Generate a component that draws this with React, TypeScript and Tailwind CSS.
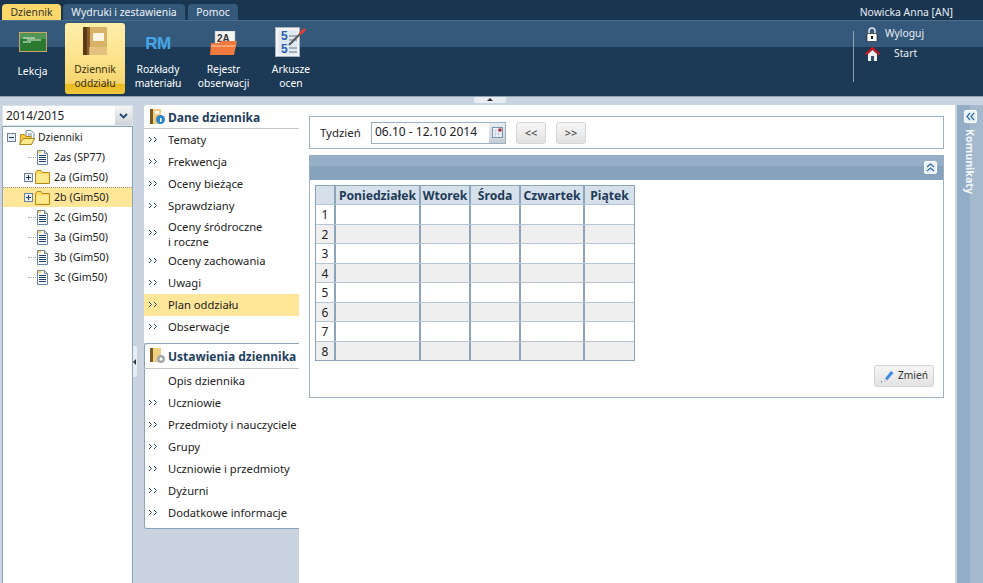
import type { ReactNode } from "react";

const Chevrons = () => (
  <svg width="10" height="7" viewBox="0 0 10 7" className="shrink-0">
    <path d="M1 1l2.500 2.500L1 6M6 1l2.500 2.500L6 6" fill="none" stroke="#1d4a78" strokeWidth="1" />
  </svg>
);

const DocIcon = () => (
  <svg width="11" height="15" viewBox="0 0 11 15" className="shrink-0">
    <path d="M.5.500h7l3 3v11H.5z" fill="#f7f9fc" stroke="#6d86a0" />
    <path d="M7.500.500v3h3" fill="#ffe69a" stroke="#6d86a0" />
    <rect x="1" y="1" width="3" height="2" fill="#ffd75a" />
    <path d="M2 5.500h7M2 7.500h7M2 9.500h7M2 11.500h7" stroke="#1f4468" />
  </svg>
);

const FolderIcon = ({ open }: { open?: boolean }) =>
  open ? (
    <svg width="16" height="15" viewBox="0 0 16 15" className="shrink-0">
      <path d="M7 .5h5l3 3v6H7z" fill="#fff" stroke="#6f88a0" />
      <path d="M9 4h4M9 6h4" stroke="#6f88a0" />
      <path d="M1.500 4.500h4l1.500 2h5v8h-11z" fill="#ffcb3d" stroke="#b08a1e" />
      <path d="M4 8.500h11.500l-3 6H.5z" fill="#ffe98f" stroke="#b08a1e" />
    </svg>
  ) : (
    <svg width="15" height="14" viewBox="0 0 15 14" className="shrink-0">
      <path d="M.5 2.500L2 .5h4l1.500 2h7v11H.5z" fill="#ffd75a" stroke="#b08a1e" />
      <path d="M1.500 4h12v8.500h-12z" fill="#ffe98f" />
    </svg>
  );

const Expander = ({ minus }: { minus?: boolean }) => (
  <svg width="9" height="9" viewBox="0 0 9 9" className="shrink-0">
    <rect x=".5" y=".5" width="8" height="8" fill="#e8eef4" stroke="#6d8299" />
    <path d={minus ? "M2 4.500h5" : "M2 4.500h5M4.500 2v5"} stroke="#1d3c5c" />
  </svg>
);

const TreeRow = ({ label, folder, active }: { label: string; folder?: boolean; active?: boolean }) => (
  <div className={`h-5 flex items-center text-[10.7px] text-[#222] ${active ? "bg-[#ffe699] border-t border-dotted border-[#999]" : ""}`}>
    {folder ? (
      <>
        <div className="ml-[21px]"><Expander /></div>
        <div className="ml-[2px]"><FolderIcon /></div>
        <span className="ml-[4px] whitespace-nowrap">{label}</span>
      </>
    ) : (
      <>
        <div className="ml-[25px] w-[8px] border-t border-dotted border-[#aaa]" />
        <div className="ml-[1px]"><DocIcon /></div>
        <span className="ml-[6px] whitespace-nowrap">{label}</span>
      </>
    )}
  </div>
);

const MenuRow = ({ label, active, noMark, tall }: { label: string; active?: boolean; noMark?: boolean; tall?: boolean }) => (
  <div className={`flex items-center pl-[4px] text-[11.2px] leading-[15px] text-[#222] ${tall ? "h-[33px]" : "h-[22px]"} ${active ? "bg-[#ffe699]" : ""}`}>
    <div className="w-[20px] shrink-0 -mt-[2px]">{!noMark && <Chevrons />}</div>
    <span className={`whitespace-pre ${tall ? "" : "-mt-[2px]"}`}>{label}</span>
  </div>
);

const RibbonBtn = ({ label, icon, active, w, single }: { label: string; icon: ReactNode; active?: boolean; w: string; single?: boolean }) => (
  <div className={`${w} h-[71px] shrink-0 rounded-[3px] flex flex-col items-center ${active ? "bg-[linear-gradient(#ffeeaa_0%,#fde48f_45%,#f6d56f_85%,#eab91c_86%,#f0c83f_100%)] text-[#3b3010]" : "text-white"}`}>
    <div className="h-[32px] flex items-end justify-center">{icon}</div>
    <div className={`text-[10.3px] leading-[14px] text-center whitespace-pre ${single ? "mt-[9px]" : "mt-[7px]"}`}>{label}</div>
  </div>
);

const Board = () => (
  <svg width="28" height="20" viewBox="0 0 28 20" className="mb-[3px]">
    <rect x=".5" y=".5" width="27" height="19" fill="#2c7a32" stroke="#c9a66a" />
    <rect x="1" y="1" width="26" height="6" fill="#8db98c" opacity=".4" />
    <path d="M4 6h12M8 8h14M4 10h8" stroke="#e8f2e6" />
  </svg>
);

const Book = () => (
  <svg width="24" height="28" viewBox="0 0 24 28" className="shrink-0">
    <rect x="0" y="0" width="6" height="28" fill="#5b3a18" />
    <rect x="6" y="0" width="18" height="28" fill="#d9b167" />
    <rect x="4" y="0" width="3" height="28" fill="#8a5f2a" />
    <rect x="10" y="6" width="11" height="8" rx="1" fill="#fdf5e3" />
    <rect x="6" y="20" width="18" height="8" fill="#e9c88b" opacity=".7" />
  </svg>
);

const Rm = () => (
  <div className="mb-[1px] text-[#45a5e6] font-bold text-[17px] leading-[20px] tracking-tight font-['Liberation_Sans',sans-serif]">RM</div>
);

const Folder2a = () => (
  <svg width="28" height="24" viewBox="0 0 28 24" className="shrink-0">
    <rect x="5" y="0" width="20" height="16" fill="#f4f4f2" stroke="#aaa" strokeWidth=".5" />
    <text x="7" y="11" fontSize="10" fontWeight="700" fill="#333" fontFamily="'Liberation Sans',sans-serif">2A</text>
    <path d="M1 12h8l2-2h16l-3 14H0z" fill="#f07a3d" />
    <path d="M1.500 14h24l-.5 2H1z" fill="#f9a473" />
  </svg>
);

const Sheet = () => (
  <svg width="32" height="30" viewBox="0 0 32 30" className="shrink-0 -mb-[2px]">
    <rect x=".5" y=".5" width="24" height="29" fill="#f1f3f5" stroke="#a9b2ba" />
    <rect x="3.500" y="3.500" width="19" height="24" fill="#dfe9f3" />
    <text x="6" y="13" fontSize="12" fontWeight="700" fill="#2c5ea8" fontFamily="'Liberation Sans',sans-serif">5</text>
    <text x="6" y="26" fontSize="12" fontWeight="700" fill="#2c5ea8" fontFamily="'Liberation Sans',sans-serif">5</text>
    <path d="M14 9h8M14 13h8M14 21h8M14 25h8" stroke="#777" />
    <path d="M14 18L28 4" stroke="#555" strokeWidth="2" />
    <path d="M25 7l5-5" stroke="#e0402f" strokeWidth="3" />
  </svg>
);

const Lock = () => (
  <svg width="12" height="15" viewBox="0 0 12 15" className="shrink-0">
    <path d="M3 7V4a3 3 0 016 0v3" fill="none" stroke="#dfe6ee" strokeWidth="1.500" />
    <rect x="1" y="6.500" width="10" height="8" rx="1" fill="#fff" stroke="#111" strokeWidth=".6" />
    <rect x="5" y="9" width="2" height="3" fill="#222" />
  </svg>
);

const Home = () => (
  <svg width="15" height="14" viewBox="0 0 15 14" className="shrink-0">
    <path d="M3 7v7h9V7L7.500 3z" fill="#eef0f2" />
    <rect x="6" y="9" width="3" height="5" fill="#36506b" />
    <path d="M.5 7.500L7.500 1l7 6.500" fill="none" stroke="#e3101a" strokeWidth="1.800" />
  </svg>
);

const Pencil = () => (
  <svg width="14" height="14" viewBox="0 0 14 14" className="shrink-0">
    <path d="M5 9.500L11 2l2.500 2L7 11.500z" fill="#3c8ae0" />
    <path d="M5 9.500l2 2-3 1.500z" fill="#f5f5f5" stroke="#bbb" strokeWidth=".5" />
    <path d="M1 13l1-.5" stroke="#446" />
  </svg>
);

const CollapseBtn = ({ up }: { up?: boolean }) => (
  <div className="w-[13px] h-[13px] rounded-[2px] bg-[#eaf1f9] border border-[#fff] flex items-center justify-center">
    <svg width="9" height="9" viewBox="0 0 9 9">
      {up ? (
        <path d="M1 4l3.500-3L8 4M1 8l3.500-3L8 8" fill="none" stroke="#2d6aa5" strokeWidth="1.200" />
      ) : (
        <path d="M4 1L1 4.500 4 8M8 1L5 4.500 8 8" fill="none" stroke="#2d6aa5" strokeWidth="1.200" />
      )}
    </svg>
  </div>
);

const days = [
  { name: "Poniedziałek", w: "w-[85px]" },
  { name: "Wtorek", w: "w-[50px]" },
  { name: "Środa", w: "w-[50px]" },
  { name: "Czwartek", w: "w-[64px]" },
  { name: "Piątek", w: "w-[49px]" },
];

const ScheduleGrid = () => (
  <div className="w-[320px] border-l border-r border-b border-[#8ba4bc]">
    <div className="flex h-[19px] bg-[#d5e0ea] border-t border-[#8ba4bc]">
      <div className="w-[20px] shrink-0 border-r-2 border-[#8ba4bc]" />
      {days.map((d) => (
        <div key={d.name} className={`${d.w} shrink-0 border-r-2 last:border-r-0 border-[#8ba4bc] text-center font-bold text-[12.2px] leading-[19px] text-[#1f3b58] whitespace-nowrap`}>
          {d.name}
        </div>
      ))}
    </div>
    {[1, 2, 3, 4, 5, 6, 7, 8].map((n) => (
      <div key={n} className={`flex h-[19.5px] border-t border-[#b5c5d4] ${n % 2 === 0 ? "bg-[#efefef]" : "bg-white"}`}>
        <div className="w-[20px] shrink-0 border-r-2 border-[#8ba4bc] text-center text-[12px] leading-[20px] text-[#222]">{n}</div>
        {days.map((d) => (
          <div key={d.name} className={`${d.w} shrink-0 border-r-2 last:border-r-0 border-[#8ba4bc]`} />
        ))}
      </div>
    ))}
  </div>
);

export default function App() {
  return (
    <div className="w-[983px] h-[583px] overflow-hidden flex flex-col bg-[#c9d4e0] font-['Noto_Sans',sans-serif]">
      {/* tabs */}
      <div className="h-[21px] shrink-0 bg-[#1a3550] flex items-end justify-between pl-[2px] pr-[30px] border-b border-[#4a6f90]">
        <div className="flex gap-[2px] text-[10.4px] leading-[16px]">
          <div className="w-[59px] h-[16px] rounded-t-[4px] bg-[#fdd76a] text-[#333] text-center">Dziennik</div>
          <div className="w-[122px] h-[16px] rounded-t-[4px] bg-[#34597a] text-[#eef3f8] text-center">Wydruki i zestawienia</div>
          <div className="w-[50px] h-[16px] ml-[1px] rounded-t-[4px] bg-[#34597a] text-[#eef3f8] text-center">Pomoc</div>
        </div>
        <div className="text-[10.4px] leading-[16px] text-[#e8eef4]">Nowicka Anna [AN]</div>
      </div>

      {/* ribbon */}
      <div className="h-[76px] shrink-0 flex justify-between bg-[linear-gradient(#35597b_0%,#35597b_35%,#1c3a56_35%,#1c3a56_100%)] border-b border-[#8fa2b4]">
        <div className="flex items-start pt-[2px] pl-[6px]">
          <RibbonBtn w="w-[53px]" label="Lekcja" icon={<Board />} single />
          <div className="w-[6px]" />
          <RibbonBtn w="w-[60px]" label={"Dziennik\noddziału"} icon={<Book />} active />
          <RibbonBtn w="w-[66px]" label={"Rozkłady\nmateriału"} icon={<Rm />} />
          <RibbonBtn w="w-[65px]" label={"Rejestr\nobserwacji"} icon={<Folder2a />} />
          <RibbonBtn w="w-[70px]" label={"Arkusze\nocen"} icon={<Sheet />} />
        </div>
        <div className="w-[130px] mt-[10px] h-[51px] border-l border-[#8fa2b4] pl-[12px] text-[10.3px] text-[#e8eef4]">
          <div className="flex items-center h-[16px] -mt-[5px]"><Lock /><span className="ml-[7px]">Wyloguj</span></div>
          <div className="flex items-center h-[16px] mt-[4px] -ml-[1px]"><Home /><span className="ml-[14px]">Start</span></div>
        </div>
      </div>

      {/* body */}
      <div className="flex-1 relative flex pt-[8px] pl-[2px] min-h-0">
        <div className="absolute left-[474px] top-0 w-[32px] h-[6px] rounded-b-[3px] bg-[#e7edf3] flex justify-center">
          <div className="w-0 h-0 mt-[1px] border-x-[3px] border-x-transparent border-b-[3px] border-b-[#333]" />
        </div>

        {/* tree column */}
        <div className="w-[131px] shrink-0 flex flex-col">
          <div className="h-[21px] flex border border-[#d9e1e9] bg-white">
            <div className="flex-1 text-[11.8px] leading-[19px] pl-[3px] text-[#222]">2014/2015</div>
            <div className="w-[17px] bg-[linear-gradient(#f6f6f6,#cfd3d8)] flex items-center justify-center">
              <svg width="9" height="6" viewBox="0 0 9 6"><path d="M1 1l3.500 3.500L8 1" fill="none" stroke="#1f4a78" strokeWidth="1.800" /></svg>
            </div>
          </div>
          <div className="flex-1 bg-white border border-[#8ba4bc] border-b-0">
            <div className="h-5 flex items-center text-[10.4px] text-[#222]">
              <div className="ml-[4px]"><Expander minus /></div>
              <div className="ml-[3px]"><FolderIcon open /></div>
              <span className="ml-[3px] mt-[2px]">Dzienniki</span>
            </div>
            <TreeRow label="2as (SP77)" />
            <TreeRow label="2a (Gim50)" folder />
            <TreeRow label="2b (Gim50)" folder active />
            <TreeRow label="2c (Gim50)" />
            <TreeRow label="3a (Gim50)" />
            <TreeRow label="3b (Gim50)" />
            <TreeRow label="3c (Gim50)" />
          </div>
        </div>

        {/* splitter */}
        <div className="w-[11px] shrink-0 relative">
          <div className="absolute left-0 top-[241px] w-[4px] h-[31px] rounded-r-[2px] bg-[#e7edf3] flex items-center">
            <div className="w-0 h-0 border-y-[3px] border-y-transparent border-r-[3px] border-r-[#333]" />
          </div>
        </div>

        {/* menu column */}
        <div className="w-[155px] shrink-0 flex flex-col">
          <div className="bg-white rounded-tl-[3px] h-[238px]">
            <div className="h-[24px] flex items-center border-b border-[#c6c6c6] pl-[6px]">
              <svg width="15" height="15" viewBox="0 0 15 15" className="shrink-0">
                <rect x="0" y="0" width="3" height="15" fill="#7a5a22" />
                <rect x="3" y="0" width="8" height="15" fill="#f0cf85" />
                <rect x="5" y="2" width="4" height="3" fill="#fff" />
                <circle cx="10.500" cy="10.500" r="4.500" fill="#2a86c8" />
                <rect x="10" y="9" width="1.500" height="4" fill="#fff" />
              </svg>
              <span className="ml-[3px] mt-[2px] font-bold text-[12px] text-[#1f3f60]">Dane dziennika</span>
            </div>
            <MenuRow label="Tematy" />
            <MenuRow label="Frekwencja" />
            <MenuRow label="Oceny bieżące" />
            <MenuRow label="Sprawdziany" />
            <MenuRow label={"Oceny śródroczne\ni roczne"} tall />
            <MenuRow label="Oceny zachowania" />
            <MenuRow label="Uwagi" />
            <MenuRow label="Plan oddziału" active />
            <MenuRow label="Obserwacje" />
          </div>
          <div className="bg-white border-t border-[#8ba4bc] rounded-tl-[3px] shadow-[inset_1px_0_0_#8ba4bc]">
            <div className="h-[25px] flex items-center border-b border-[#c6c6c6] pl-[6px]">
              <svg width="16" height="16" viewBox="0 0 16 16" className="shrink-0">
                <rect x="0" y="0" width="3" height="14" fill="#7a5a22" />
                <rect x="3" y="0" width="8" height="14" fill="#f0cf85" />
                <circle cx="11" cy="11" r="4" fill="#a3a8ad" />
                <circle cx="11" cy="11" r="1.500" fill="#fff" />
              </svg>
              <span className="ml-[2px] mt-[2px] font-bold text-[12px] text-[#1f3f60] whitespace-nowrap">Ustawienia dziennika</span>
            </div>
          </div>
          <div className="bg-white border-b border-[#8ba4bc] rounded-bl-[3px] shadow-[inset_1px_0_0_#8ba4bc] h-[160px] pt-[1px]">
            <MenuRow label="Opis dziennika" noMark />
            <MenuRow label="Uczniowie" />
            <MenuRow label="Przedmioty i nauczyciele" />
            <MenuRow label="Grupy" />
            <MenuRow label="Uczniowie i przedmioty" />
            <MenuRow label="Dyżurni" />
            <MenuRow label="Dodatkowe informacje" />
          </div>
        </div>

        {/* content */}
        <div className="w-[656px] shrink-0 bg-white pt-[11px] pl-[10px] pr-[11px] flex flex-col">
          <div className="h-[33px] border border-[#9db1c4] flex items-center pl-[10px] text-[12px] text-[#222]">
            <span className="w-[51px] text-[11.4px]">Tydzień</span>
            <div className="w-[135px] h-[22px] border border-[#9db1c4] flex">
              <span className="flex-1 pl-[3px] leading-[18px] whitespace-nowrap">06.10 - 12.10 2014</span>
              <div className="w-[16px] bg-[linear-gradient(#e9edf1,#c4ccd4)] flex items-center justify-center">
                <svg width="11" height="11" viewBox="0 0 11 11">
                  <rect x=".5" y=".5" width="10" height="10" fill="#eef2f7" stroke="#7d93aa" />
                  <path d="M.5 3.500h10M3.500 3.500v7M6.500 3.500v7M.5 7h10" stroke="#b8c5d2" strokeWidth=".6" />
                  <rect x="6.500" y="1.500" width="3" height="3" fill="#a6242c" />
                </svg>
              </div>
            </div>
            <div className="ml-[10px] w-[30px] h-[22px] border border-[#d5d5d5] rounded-[3px] bg-[linear-gradient(#f6f6f6,#e2e2e2)] text-center leading-[20px] text-[11px] text-[#333]">&lt;&lt;</div>
            <div className="ml-[10px] w-[30px] h-[22px] border border-[#d5d5d5] rounded-[3px] bg-[linear-gradient(#f6f6f6,#e2e2e2)] text-center leading-[20px] text-[11px] text-[#333]">&gt;&gt;</div>
          </div>
          <div className="mt-[6px] h-[243px] border border-[#9db1c4] border-t-0 flex flex-col">
            <div className="h-[25px] shrink-0 bg-[linear-gradient(#97afc6_0%,#97afc6_45%,#86a2bc_45%,#86a2bc_100%)] flex items-center justify-end pr-[6px]">
              <CollapseBtn up />
            </div>
            <div className="pl-[5px] pt-[5px]">
              <ScheduleGrid />
            </div>
            <div className="flex justify-end pr-[9px] mt-[4px]">
              <div className="w-[60px] h-[22px] border border-[#d5d5d5] rounded-[3px] bg-[linear-gradient(#f6f6f6,#e2e2e2)] flex items-center justify-center gap-[4px] text-[10.2px] text-[#333]">
                <Pencil />
                <span>Zmień</span>
              </div>
            </div>
          </div>
        </div>

        {/* messages rail */}
        <div className="ml-[2px] w-[26px] shrink-0 bg-[linear-gradient(90deg,#94adc6_0%,#94adc6_50%,#a4b9cd_50%,#a4b9cd_100%)] flex flex-col items-center pt-[5px]">
          <CollapseBtn />
          <div className="mt-[6px] text-[10.7px] font-bold text-[#f3f6f9] [writing-mode:vertical-rl] whitespace-nowrap">Komunikaty</div>
        </div>
      </div>
    </div>
  );
}
